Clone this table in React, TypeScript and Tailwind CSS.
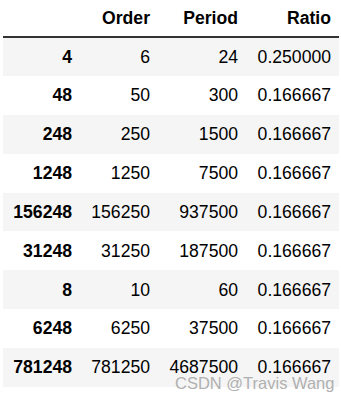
const rows: [string, string, string, string][] = [
  ["4", "6", "24", "0.250000"],
  ["48", "50", "300", "0.166667"],
  ["248", "250", "1500", "0.166667"],
  ["1248", "1250", "7500", "0.166667"],
  ["156248", "156250", "937500", "0.166667"],
  ["31248", "31250", "187500", "0.166667"],
  ["8", "10", "60", "0.166667"],
  ["6248", "6250", "37500", "0.166667"],
  ["781248", "781250", "4687500", "0.166667"],
];

export default function App() {
  return (
    <div className="relative h-[402px] w-[341px] overflow-hidden bg-white pl-[3px] font-['Liberation_Sans',Arial,sans-serif] text-[17.6px] text-black">
      <table className="w-[336px] table-fixed border-collapse">
        <colgroup>
          <col className="w-[77px]" />
          <col className="w-[78px]" />
          <col className="w-[88px]" />
          <col className="w-[93px]" />
        </colgroup>
        <thead>
          <tr className="h-[37px] border-b-2 border-[#333]">
            <th className="pr-[8px] text-right font-bold"></th>
            <th className="pr-[8px] text-right font-bold">Order</th>
            <th className="pr-[8px] text-right font-bold">Period</th>
            <th className="pr-[8px] text-right font-bold">Ratio</th>
          </tr>
        </thead>
        <tbody>
          {rows.map((r, i) => (
            <tr key={r[0]} className={i % 2 === 0 ? "h-[38.9px] bg-[#f5f5f5]" : "h-[38.9px] bg-white"}>
              <th className="pr-[8px] text-right font-bold">{r[0]}</th>
              <td className="pr-[8px] text-right">{r[1]}</td>
              <td className="pr-[8px] text-right">{r[2]}</td>
              <td className="pr-[8px] text-right">{r[3]}</td>
            </tr>
          ))}
        </tbody>
      </table>
      {/* watermark over the last row */}
      <span className="absolute left-[175px] top-[375px] text-[16.5px] leading-none text-[#b0b0b0]">
        CSDN @Travis Wang
      </span>
    </div>
  );
}
